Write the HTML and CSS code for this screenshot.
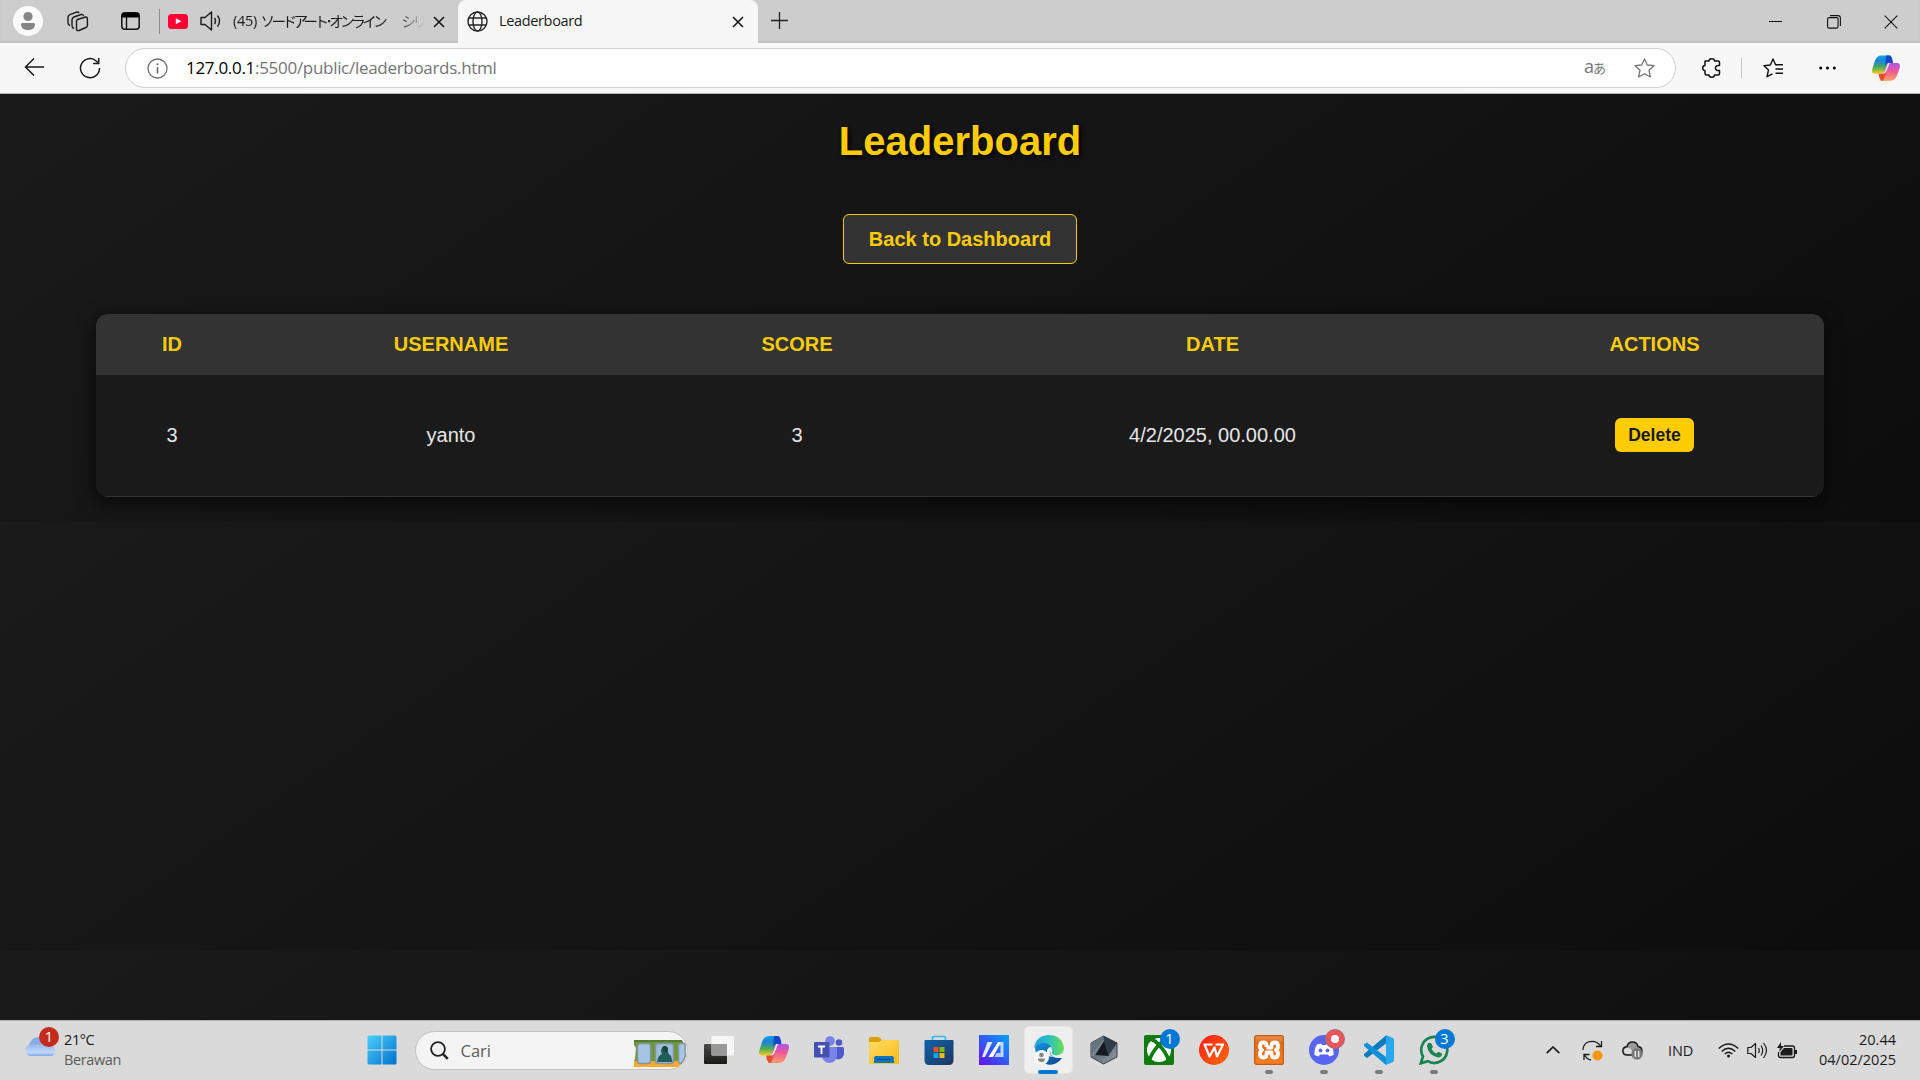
FILE: index.html
```html
<!DOCTYPE html>
<html lang="id">
<head>
<meta charset="utf-8">
<title>Leaderboard</title>
<link rel="stylesheet" href="styles.css">
</head>
<body>
<svg class="defs" width="0" height="0" aria-hidden="true">
  <defs>
    <linearGradient id="cpA" x1="0" y1="0" x2="0" y2="1"><stop offset="0" stop-color="#12a5e8"/><stop offset=".3" stop-color="#1a83d8"/><stop offset=".65" stop-color="#4dac54"/><stop offset="1" stop-color="#f6cf22"/></linearGradient>
    <linearGradient id="cpB" x1="0" y1="0" x2="0" y2="1"><stop offset="0" stop-color="#ab52ea"/><stop offset=".45" stop-color="#ee5798"/><stop offset="1" stop-color="#ffa167"/></linearGradient>
    <linearGradient id="win" x1="0" y1="0" x2="1" y2="1"><stop offset="0" stop-color="#4bd0fb"/><stop offset="1" stop-color="#0071ce"/></linearGradient>
    <linearGradient id="cloudG" x1="0" y1="0" x2="0" y2="1"><stop offset="0" stop-color="#89aeea"/><stop offset=".75" stop-color="#c3d8f8"/><stop offset="1" stop-color="#7ba4e6"/></linearGradient>
    <linearGradient id="folderG" x1="0" y1="0" x2="1" y2="1"><stop offset="0" stop-color="#ffdc69"/><stop offset="1" stop-color="#fcbb14"/></linearGradient>
    <linearGradient id="storeG" x1="0" y1="0" x2="1" y2="1"><stop offset="0" stop-color="#0b62ad"/><stop offset="1" stop-color="#233560"/></linearGradient>
    <linearGradient id="asusG" x1="1" y1="0" x2="0" y2="1"><stop offset="0" stop-color="#00a5ff"/><stop offset="1" stop-color="#6510f5"/></linearGradient>
    <linearGradient id="edgeA" x1="0" y1="0" x2="1" y2="0"><stop offset="0" stop-color="#1e9fe0"/><stop offset=".5" stop-color="#2bbfc0"/><stop offset="1" stop-color="#6be04f"/></linearGradient>
    <linearGradient id="edgeB" x1="0" y1="0" x2="1" y2="1"><stop offset="0" stop-color="#1493dc"/><stop offset="1" stop-color="#0b4591"/></linearGradient>
    <linearGradient id="tvG" x1="0" y1="0" x2="0" y2="1"><stop offset="0" stop-color="#4c4c4a"/><stop offset="1" stop-color="#181818"/></linearGradient>
    <linearGradient id="armG" x1="0" y1="0" x2="1" y2="1"><stop offset="0" stop-color="#596570"/><stop offset=".5" stop-color="#69757e"/><stop offset="1" stop-color="#969da4"/></linearGradient>
    <linearGradient id="wpsG" x1="0" y1="0" x2="1" y2="1"><stop offset="0" stop-color="#ff1c1c"/><stop offset="1" stop-color="#ff6b05"/></linearGradient>
    <linearGradient id="xamG" x1="0" y1="0" x2="0" y2="1"><stop offset="0" stop-color="#ef9145"/><stop offset=".25" stop-color="#dd6d1f"/><stop offset="1" stop-color="#fb7d22"/></linearGradient>
    <symbol id="copilot" viewBox="0 0 30 28">
      <path fill="url(#cpA)" d="M10 0H20L15 15Q13 19.500 9 19.500H3Q-1 19.500 .5 14L3 6Q5 0 10 0Z"/>
      <path fill="#1648c6" d="M15 0H19Q21.500 0 22.500 8H17Q15 8 14 11Z"/>
      <path fill="url(#cpB)" d="M20 27H9L14.500 13Q16.500 8 20.500 8H27Q31 8 29.500 14L27 21Q25 27 20 27Z"/>
      <path fill="#e64d31" d="M15 19L12 27H11Q8 27 7 19.500H10Q13 19.500 15 16Z"/>
      <path fill="#e9eaf0" d="M17.500 8H19L15.500 17Q14.500 19.500 12 19.500H11Q13.500 18.500 14.500 15L16 11Q16.500 9 17.500 8Z"/>
    </symbol>
    <symbol id="close" viewBox="0 0 12 12"><path d="M1 1L11 11M11 1L1 11" fill="none" stroke="#111" stroke-width="1.500"/></symbol>
    <symbol id="person" viewBox="0 0 30 30"><circle cx="15" cy="15" r="15" fill="#fafafa"/><circle cx="15" cy="10.500" r="4.600" fill="#858585"/><path fill="#858585" d="M9.500 17H20.500Q22 17 22 18.500Q21.500 24 15 24Q8.500 24 8 18.500Q8 17 9.500 17Z"/></symbol>
  </defs>
</svg>

<header class="tabstrip">
  <svg class="profile" width="30" height="30"><use href="#person"/></svg>
  <svg class="workspaces" width="22" height="21" viewBox="0 0 22 21" fill="none" stroke="#1a1a1a" stroke-width="1.400"><path d="M10.500 8.500L18.500 6Q20 5.700 20.300 7L20.500 14Q20.500 16 19 16.500L12 19.500Q9.500 20 9.500 18V10.500Q9.500 9 10.500 8.500Z"/><path d="M7 17.500Q5 17 5 14.500V9Q5 7 7 6L14 3.500Q16 3 16.500 5"/><path d="M3 14.500Q1 14 1 11.500V6.500Q1 4.500 3 3.700L9.500 1.200Q11.500 .7 12 2"/></svg>
  <svg class="vtabs" width="19" height="18" viewBox="0 0 19 18"><rect x=".8" y=".8" width="17.400" height="16.400" rx="3" fill="none" stroke="#111" stroke-width="1.500"/><path d="M1 5.500V3Q1 1 3 1H16Q18 1 18 3V5.500Z"/><path d="M5.500 5V17" stroke="#111" stroke-width="1.400"/></svg>
  <span class="strip-line"></span>
  <div class="tab tab-back">
    <svg class="yt" width="20" height="15" viewBox="0 0 20 15"><rect width="20" height="15" rx="3.500" fill="#ff0033"/><path fill="#fff" d="M7.800 4.300L13.300 7.300L7.800 10.300Z"/></svg>
    <svg class="speaker" width="21" height="20" viewBox="0 0 21 20" fill="none" stroke="#1a1a1a" stroke-width="1.400"><path d="M1 6.500H5L11.500 1V19L5 13.500H1Z" stroke-linejoin="round"/><path d="M14.500 7Q16.500 10 14.500 13M17.500 4.500Q21.500 10 17.500 15.500"/></svg>
    <span class="tab-title yt-title">(45) <span class="jp">ソードアート･オンライン</span><span class="jp jp-end">シリ</span></span>
    <svg class="tab-close" width="12" height="12"><use href="#close"/></svg>
  </div>
  <div class="tab tab-active">
    <svg width="21" height="21" viewBox="0 0 21 21" fill="none" stroke="#262626" stroke-width="1.400"><circle cx="10.500" cy="10.500" r="9.500"/><ellipse cx="10.500" cy="10.500" rx="4.500" ry="9.500"/><path d="M2 7H19M2 14H19"/></svg>
    <span class="tab-title active-title">Leaderboard</span>
    <svg class="tab-close" width="12" height="12"><use href="#close"/></svg>
  </div>
  <svg class="newtab" width="18" height="18" viewBox="0 0 18 18"><path d="M8.500 0V17M0 8.500H17" stroke="#222" stroke-width="1.300"/></svg>
  <div class="window-controls">
    <svg width="14" height="14" viewBox="0 0 14 14"><path d="M0 6.500H13" stroke="#111"/></svg>
    <svg width="14" height="14" viewBox="0 0 14 14" fill="none" stroke="#111" stroke-width="1.100"><rect x=".6" y="2.600" width="10.500" height="10.500" rx="1.500"/><path d="M3 .6H11Q13.400 .6 13.400 3V11"/></svg>
    <svg width="14" height="14" viewBox="0 0 14 14"><path d="M.7 .7L13.300 13.300M13.300 .7L.7 13.300" stroke="#111" stroke-width="1.100"/></svg>
  </div>
</header>

<nav class="toolbar">
  <svg class="back" width="21" height="18" viewBox="0 0 21 18" fill="none" stroke="#1a1a1a" stroke-width="1.500"><path d="M20 9H1.500M10 .5L1.500 9L10 17.500"/></svg>
  <svg class="reload" width="22" height="22" viewBox="0 0 22 22" fill="none" stroke="#1a1a1a" stroke-width="1.500"><path d="M20.500 11A9.500 9.500 0 1 1 17.500 4.200L19.500 6.300"/><path d="M19.700 1V6.500H14.200"/></svg>
  <div class="address">
    <svg width="21" height="21" viewBox="0 0 21 21"><circle cx="10.500" cy="10.500" r="9.500" fill="none" stroke="#707070" stroke-width="1.300"/><path d="M10.500 9V15.500" stroke="#666" stroke-width="1.500"/><circle cx="10.500" cy="6.300" r="1" fill="#666"/></svg>
    <span class="url"><b>127.0.0.1</b>:5500/public/leaderboards.html</span>
    <span class="translate">a<span>あ</span></span>
    <svg class="star" width="21" height="20" viewBox="0 0 21 20"><path d="M10.500 1L13.300 7L20 7.700L15 12.200L16.400 19L10.500 15.700L4.600 19L6 12.200L1 7.700L7.700 7Z" fill="none" stroke="#767676" stroke-width="1.300" stroke-linejoin="round"/></svg>
  </div>
  <svg class="puzzle" width="19" height="20" viewBox="0 0 19 20"><path d="M3 3H7Q7 .8 9.800 .8Q12.500 .8 12.500 3H16Q17.500 3 17.500 4.500V7.500Q13.500 7 13.500 10Q13.500 13 17.500 12.500V15.500Q17.500 17 16 17H12.500Q12.500 19.200 9.800 19.200Q7 19.200 7 17H4.500Q3 17 3 15.500V12.500Q.8 12.500 .8 10Q.8 7.500 3 7.500Z" fill="none" stroke="#111" stroke-width="1.500" stroke-linejoin="round"/></svg>
  <span class="tool-line"></span>
  <svg class="favs" width="21" height="20" viewBox="0 0 21 20" fill="none" stroke="#111" stroke-width="1.400"><path d="M13.500 7L12.600 6.800L10 1L7.300 7L1 7.700L5.500 12L4 18.700L9.500 15.800" stroke-linejoin="round"/><path d="M13 6.800H20M12.500 11H20M12.500 15.200H20"/></svg>
  <svg class="dots" width="17" height="4" viewBox="0 0 17 4"><circle cx="1.700" cy="2" r="1.500"/><circle cx="8.500" cy="2" r="1.500"/><circle cx="15.300" cy="2" r="1.500"/></svg>
  <svg class="cop" width="28" height="27"><use href="#copilot"/></svg>
</nav>

<main class="page">
  <h1>Leaderboard</h1>
  <a class="back-button">Back to Dashboard</a>
  <table class="scores">
    <colgroup><col class="c-id"><col class="c-user"><col class="c-score"><col class="c-date"><col class="c-act"></colgroup>
    <thead><tr><th>ID</th><th>USERNAME</th><th>SCORE</th><th>DATE</th><th>ACTIONS</th></tr></thead>
    <tbody><tr><td>3</td><td>yanto</td><td>3</td><td>4/2/2025, 00.00.00</td><td><button class="delete">Delete</button></td></tr></tbody>
  </table>
</main>

<footer class="taskbar">
  <div class="weather">
    <div class="weather-icon">
      <svg width="31" height="21" viewBox="0 0 31 21"><path fill="#88ace9" d="M4 9Q7 0 15 1Q22 1 24 9Z"/><path fill="url(#cloudG)" d="M7 20Q.5 20 .5 14Q.5 9 6 8.500Q11 8 13 10Q16 6 21 6Q26 6 27 10Q30.500 11 30.500 15Q30 20 25 20Z"/></svg>
      <span class="badge badge-red">1</span>
    </div>
    <div class="weather-text"><span>21°C</span><span class="muted">Berawan</span></div>
  </div>
  <div class="app"><svg width="30" height="30" viewBox="0 0 30 30"><path fill="url(#win)" d="M2 .5H14.500V14.500H.5V2Q.5 .5 2 .5ZM15.500 .5H28Q29.500 .5 29.500 2V14.500H15.500ZM.5 15.500H14.500V29.500H2Q.5 29.500 .5 28ZM15.500 15.500H29.500V28Q29.500 29.500 28 29.500H15.500Z"/></svg></div>
  <div class="search">
    <svg width="19" height="19" viewBox="0 0 19 19" fill="none" stroke="#222"><circle cx="8" cy="8" r="6.900" stroke-width="1.800"/><path d="M12.800 12.800L17.800 17.800" stroke-width="2.500"/></svg>
    <span>Cari</span>
    <svg class="train" width="52" height="27" viewBox="0 0 52 27"><path fill="#679a37" d="M0 0H48Q52 7 52 14Q51 21 46 27H0Z"/><path fill="#507c30" d="M0 0H48V2H0Z"/><path fill="#ffa92d" d="M0 21H49Q47 25 43 27H0Z"/><path fill="#eee" d="M0 5L2 8L1 19L0 21Z"/><g stroke="#8c9099" stroke-width="1.500"><rect x="3.500" y="3.500" width="13" height="20" rx="2.500" fill="#a5c5e5"/><rect x="21.500" y="3.500" width="18" height="20" rx="2.500" fill="#9dbddd"/><path fill="#a5c5e5" d="M51 3.500H47Q44.500 3.500 44.500 6V21Q44.500 23 47 23.500Q51 20 51.500 14Z"/></g><path fill="#215d59" d="M23 22Q24 15 28 14Q26 11 28 8Q29 6 31 6Q35 7 34 12Q34 14 37 16L38.500 22Z"/><path fill="#174540" d="M28 8Q31 4 34 8L33 12L29 11Z"/></svg>
  </div>
  <div class="apps">
    <div class="app"><svg width="30" height="30" viewBox="0 0 30 30"><rect x="0" y="9" width="23" height="20" rx="1" fill="url(#tvG)"/><rect x="7.500" y="1" width="22.500" height="19.500" rx="1" fill="#f8f8f8" fill-opacity=".9"/><path fill="#999" d="M7.500 9H22Q23 9 23 10V20.500H8.500Q7.500 20.500 7.500 19.500Z"/></svg></div>
    <div class="app"><svg width="30" height="28"><use href="#copilot"/></svg></div>
    <div class="app"><svg width="30" height="30" viewBox="0 0 30 30"><circle cx="25" cy="7.500" r="3.300" fill="#5059c9"/><path fill="#5059c9" d="M21 12H28.500Q30 12 30 13.500V19Q29 24 24 24.500L20 23Z"/><circle cx="16" cy="6" r="4.800" fill="#7b83eb"/><path fill="#7b83eb" d="M8 12H21.500Q23 12 23 13.500V21Q22 28 15.500 28Q9 28 8 21Z"/><rect y="7" width="15.500" height="15.500" rx="1" fill="#4650b1"/><path d="M4 11.500H11M7.500 11.500V19" stroke="#fff" stroke-width="1.900"/></svg></div>
    <div class="app"><svg width="30" height="30" viewBox="0 0 30 30"><path fill="#e0a000" d="M0 3Q0 2 1 2H10L13 5H29Q30 5 30 6V10H0Z"/><path fill="url(#folderG)" d="M0 8Q0 7 1 7H10L13 5H30V28Q30 29 29 29H1Q0 29 0 28Z"/><path fill="#0e74bf" d="M5 28V23Q5 21 7 21H23Q25 21 25 23V28Z"/><path stroke="#084e86" d="M8.500 24.500H21.500"/></svg></div>
    <div class="app"><svg width="30" height="30" viewBox="0 0 30 30"><path fill="none" stroke="#27bff0" stroke-width="1.700" d="M8.500 6V2.500Q8.500 1.500 9.500 1.500H20.500Q21.500 1.500 21.500 2.500V6"/><path fill="url(#storeG)" d="M1 5H29Q29.500 5 29.500 6V25Q29.500 30 25 30H5Q.5 30 .5 25V6Q.5 5 1 5Z"/><path fill="#f25022" d="M9.500 12H14.500V17H9.500Z"/><path fill="#7fba00" d="M15.500 12H20.500V17H15.500Z"/><path fill="#00a4ef" d="M9.500 18H14.500V23H9.500Z"/><path fill="#ffb900" d="M15.500 18H20.500V23H15.500Z"/></svg></div>
    <div class="app"><svg width="30" height="30" viewBox="0 0 30 30"><path fill="url(#asusG)" d="M0 0H30V30H0Z"/><path fill="#dfe6ff" d="M8.500 7H13.500L6 22H3Z"/><path fill="#fff" d="M19 7H22L14 22H9.500Z"/><path fill="#c3d6ff" d="M21 7H24.500V22H21.500V10.500L19.500 11Z"/><path fill="#b8c9ff" d="M15.500 22L17.500 18H22V22Z"/></svg></div>
    <div class="app app-active"><svg width="30" height="30" viewBox="0 0 30 30"><path fill="url(#edgeB)" d="M1 12Q6 6 13 8Q19 11 17 16Q15 24 28 23Q22 31 14 29.500Q2 27 1 12Z"/><path fill="url(#edgeA)" d="M0 13Q2 1 14 0Q28 0 30 13Q30 20 22 20.500Q17 20 18 17Q19 12 14 9Q6 6 0 13Z"/><path fill="#eee" d="M13 15Q15 11 17.500 12.500Q18 15 16.500 17.500Q16 21 19 22Q14 22 13 19Z"/><circle cx="7.500" cy="22.500" r="7.500" fill="#f6f6f6"/><circle cx="7.500" cy="20" r="2.300" fill="#858585"/><path fill="#858585" d="M4 23.500H11Q11 27 7.500 27Q4 27 4 23.500Z"/></svg><i class="run"></i></div>
    <div class="app"><svg width="30" height="30" viewBox="0 0 30 30"><path fill="url(#armG)" stroke="#343b42" d="M14.500 1L28 8V22L14.500 29L2 22V8Z"/><path fill="#333d47" d="M14.500 1L28 8L20 20L14.500 5L2 20V8Z"/><path fill="#151b22" d="M15 6L20 21L6 20Z"/><path fill="#86929b" d="M14.500 1L15 6L6 20L2 22V8Z" fill-opacity=".65"/></svg></div>
    <div class="app"><svg width="30" height="30" viewBox="0 0 30 30"><rect width="30" height="30" rx="2" fill="#107c10"/><circle cx="15" cy="15" r="12" fill="#fff"/><path fill="none" stroke="#107c10" stroke-width="3.800" d="M7 4Q12 6 15 10Q22 17 24.500 25M23 4Q18 6 15 10Q8 17 5.500 25"/></svg><span class="badge badge-blue">1</span></div>
    <div class="app"><svg width="30" height="30" viewBox="0 0 30 30"><circle cx="15" cy="15" r="15" fill="url(#wpsG)"/><path fill="none" stroke="#fff" stroke-width="2.200" stroke-linejoin="round" d="M13.500 9.500H5.500L10.500 21.500L15.500 12.500L18 21.500L24 9.500H16.500"/></svg></div>
    <div class="app"><svg width="30" height="30" viewBox="0 0 30 30"><rect x=".6" y=".6" width="28.800" height="28.800" rx="2" fill="url(#xamG)" stroke="#bd5d18" stroke-width="1.200"/><path fill="none" stroke="#fff" stroke-width="3.800" stroke-linejoin="round" d="M12.500 12V10.500Q12.500 7.500 9.500 7.500Q6 7.500 6 11Q6 14 8 15Q6 16 6 19Q6 22.500 9.500 22.500Q12.500 22.500 12.500 19.500V17.500H17.500V19.500Q17.500 22.500 20.500 22.500Q24 22.500 24 19Q24 16 22 15Q24 14 24 11Q24 7.500 20.500 7.500Q17.500 7.500 17.500 10.500V12.500H12.500"/></svg><i class="run"></i></div>
    <div class="app"><svg width="30" height="30" viewBox="0 0 30 30"><circle cx="15" cy="15" r="15" fill="#5865f2"/><path fill="#fff" d="M8 9.500L12 8.500L13 10H17L18 8.500L22 9.500Q25 14 24.500 20L20.500 21.500L19 19.500H11L9.500 21.500L5.500 20Q5 14 8 9.500Z"/><circle cx="11.500" cy="15.500" r="1.900" fill="#5865f2"/><circle cx="18.500" cy="15.500" r="1.900" fill="#5865f2"/></svg><span class="badge badge-rec"></span><i class="run"></i></div>
    <div class="app"><svg width="30" height="30" viewBox="0 0 30 30"><path fill="#0879bd" d="M0 19L22 .5V8.500L3 23L.5 21Q-.5 20 0 19Z"/><path fill="#1291d8" d="M0 11Q-.5 10 .5 9L3 7.500L22 22V30Z"/><path fill="#29a8f0" d="M22 0L29 3Q30 3.500 30 5V25Q30 26.500 29 27L22 30Z"/></svg><i class="run"></i></div>
    <div class="app"><svg width="30" height="30" viewBox="0 0 30 30"><path fill="none" stroke="#178352" stroke-width="2.700" d="M1.800 28.300L4 21.500A13 13 0 1 1 8.700 26.200Z"/><path fill="#178352" d="M9.500 8H12L14 12L12.500 14Q14 17 17.500 18.500L19.500 16.800L23 18.500Q23 22 19.500 22.500Q9 20.500 8 11Q8 9 9.500 8Z"/></svg><span class="badge badge-blue">3</span><i class="run"></i></div>
  </div>
  <div class="tray">
    <svg class="chev" width="14" height="8" viewBox="0 0 14 8"><path d="M.7 7.200L7 1L13.300 7.200" fill="none" stroke="#1a1a1a" stroke-width="1.700"/></svg>
    <svg class="sync" width="21" height="21" viewBox="0 0 21 21" fill="none" stroke="#1a1a1a" stroke-width="1.300"><path d="M1 10Q1 4.500 6 2Q14-.5 18.500 6M19.500 1V6.500H14M2 20V14.500H7.500M2.500 15Q5 19.500 9 20"/><circle cx="15.500" cy="15.500" r="5" fill="#f99600" stroke="none"/></svg>
    <svg class="cloud" width="21" height="19" viewBox="0 0 21 19"><path fill="#999" stroke="#1a1a1a" stroke-width="1.400" d="M5 14Q.8 14 .8 10Q.8 6 5 5.500Q6 1 10.500 1Q15 1 16 5.500Q20 6 20 10Q20 14 16 14Z"/><path fill="#ddd" d="M5 13Q2 13 2 10Q2 6.500 6 7Q9 7 10 10V13Z"/><circle cx="15" cy="13" r="5.700" fill="#777"/><path d="M13.300 10V16M16.700 10V16" stroke="#fff" stroke-width="1.200"/></svg>
    <span class="lang">IND</span>
    <svg class="wifi" width="21" height="15" viewBox="0 0 21 15" fill="none" stroke="#1a1a1a" stroke-width="1.400"><path d="M.7 5.500Q10.500-3.500 20.300 5.500M3.700 8.500Q10.500 2 17.300 8.500M6.700 11Q10.500 7.500 14.300 11"/><circle cx="10.500" cy="13" r="1.500" fill="#1a1a1a" stroke="none"/></svg>
    <svg class="vol" width="21" height="17" viewBox="0 0 21 17" fill="none" stroke="#1a1a1a" stroke-width="1.200"><path d="M.8 5.500H4L8.500 1.500V15.500L4 11.500H.8Z" stroke-linejoin="round"/><path d="M11.500 6Q13 8.500 11.500 11M14 3.500Q17.500 8.500 14 13.500M16.500 1Q22.500 8.500 16.500 16"/></svg>
    <svg class="batt" width="21" height="17" viewBox="0 0 21 17"><path fill="none" stroke="#1a1a1a" stroke-width="1.300" d="M7 4H15.500Q17.500 4 17.500 6V13.500Q17.500 15.500 15.500 15.500H3.500Q1.500 15.500 1.500 13.500V10"/><path d="M7 6H14.500Q15.500 6 15.500 7V12.500Q15.500 13.500 14.500 13.500H3.500V10ZM18 8H20V12H18ZM4 0L0 6H3L2 10L7 4H4Z" fill="#1a1a1a"/></svg>
    <div class="clock"><span class="time">20.44</span><span class="date">04/02/2025</span></div>
  </div>
</footer>
</body>
</html>
```
FILE: styles.css
```css
* { box-sizing: border-box; }
body {
  margin: 0;
  width: 1920px;
  height: 1080px;
  overflow: hidden;
  display: flex;
  flex-direction: column;
  font-family: "Open Sans", "Noto Sans CJK JP", sans-serif;
  color: #1a1a1a;
}
svg { display: block; flex: none; }
.defs { position: absolute; }

/* Tab strip */
.tabstrip { height: 43px; flex: none; display: flex; align-items: center; background: #cdcdcd; box-shadow: inset 0 -2px 1px #c1c1c1; padding-left: 13px; }
.profile { margin-right: 24px; margin-bottom: 1px; }
.workspaces { margin-right: 32px; margin-bottom: 1px; }
.vtabs { margin-right: 19px; margin-bottom: 1px; }
.strip-line { width: 1px; height: 25px; background: #8c8c8c; margin-right: 8px; }
.tab { display: flex; align-items: center; height: 43px; flex: none; white-space: nowrap; }
.tab-back { width: 290px; }
.speaker { margin-left: 12px; margin-bottom: 1px; }
.tab-title { font-size: 14.500px; line-height: 20px; height: 22px; }
.yt-title { margin-left: 12px; width: 191px; overflow: hidden; display: flex; letter-spacing: -.3px; white-space: pre; mask-image: linear-gradient(to right, #000 165px, transparent 191px); }
.jp { font-family: "Noto Sans CJK JP", sans-serif; font-size: 14.500px; width: 124px; flex: none; letter-spacing: -3.500px; }
.jp-end { margin-left: 17px; }
.tab-close { margin-left: 9px; }
.tab-active { width: 300px; background: #f7f7f7; border-radius: 8px 8px 0 0; padding-left: 9px; }
.active-title { margin-left: 11px; width: 100px; letter-spacing: -.35px; }
.tab-active .tab-close { margin-left: auto; margin-right: 14px; }
.newtab { margin-left: 13px; margin-bottom: 1px; }
.window-controls { display: flex; gap: 43.500px; margin-left: auto; margin-right: 22px; }

/* Toolbar */
.toolbar { height: 51px; flex: none; display: flex; align-items: center; background: #f7f7f7; border-bottom: 1px solid #b5b5b5; padding-left: 24px; }
.back { margin-right: 34px; margin-bottom: 2px; }
.reload { margin-right: 24px; }
.address { width: 1551px; height: 40px; flex: none; display: flex; align-items: center; background: #fff; border: 1px solid #cfcfcf; border-radius: 20px; padding-left: 21px; }
.url { margin-left: 18px; margin-bottom: 2px; font-size: 17px; color: #757575; letter-spacing: -.3px; white-space: nowrap; }
.url b { font-weight: 400; color: #000; }
.translate { margin-left: auto; margin-right: 28px; margin-bottom: 2px; font-size: 18px; line-height: 20px; color: #767676; display: flex; align-items: baseline; }
.translate span { font-size: 13px; margin-left: -1px; }
.star { margin-right: 20px; }
.puzzle { margin-left: 26px; }
.tool-line { width: 1px; height: 20px; background: #c6c6c6; margin: 0 21px 0 20px; }
.favs { margin-right: 35px; }
.dots { margin-right: 36px; margin-bottom: 1px; }

/* Leaderboard page */
.page {
  height: 926px;
  flex: none;
  display: flex;
  flex-direction: column;
  align-items: center;
  font-family: "Liberation Sans", Arial, sans-serif;
  font-size: 20px;
  background: linear-gradient(145deg, #1a1a1a, #0d0d0d) 0 0 / 100% 428px;
  padding-top: 24px;
}
h1 { margin: 0; font-size: 40px; line-height: 46px; color: #fc0; text-shadow: 2px 2px 5px #000; }
.back-button { margin-top: 50px; height: 50px; padding: 0 25px; border: 1px solid #fc0; border-radius: 6px; background: #333; color: #fc0; font-weight: 700; line-height: 48px; }
.scores { margin-top: 50px; width: 1728px; height: 183px; table-layout: fixed; border-collapse: separate; border-spacing: 0; border-radius: 12px; overflow: hidden; background: #1a1a1a; box-shadow: 0 5px 19px rgba(0, 0, 0, .7); color: #e6e6e6; text-align: center; }
.c-id { width: 152px; }
.c-user { width: 406px; }
.c-score { width: 286px; }
.c-date { width: 545px; }
.c-act { width: 339px; }
.scores th { height: 61px; padding: 0 0 1px; background: #333; color: #fc0; }
.scores td { height: 122px; padding: 0 0 1px; border-bottom: 1px solid #333; }
.delete { display: block; margin: 0 auto; width: 79px; height: 34px; padding: 0; border: 0; border-radius: 6px; background: #fc0; color: #1a1a1a; font: 700 17.500px "Liberation Sans", Arial, sans-serif; }

/* Taskbar */
.taskbar { height: 60px; flex: none; display: flex; align-items: center; background: #dadada; border-top: 1px solid #b0b0b0; padding-bottom: 1px; }
.weather { width: 354.500px; flex: none; padding-left: 25px; display: flex; align-items: center; }
.weather-icon { position: relative; width: 31px; margin-bottom: 7px; }
.weather-text { margin-left: 8px; padding-bottom: 1px; display: flex; flex-direction: column; font-size: 14.500px; line-height: 20px; letter-spacing: -.4px; }
.muted { color: #5b5b5b; }
.badge { position: absolute; width: 20px; height: 20px; border-radius: 50%; color: #fff; font-size: 14.500px; line-height: 20px; text-align: center; }
.badge-red { left: 14px; top: -9px; background: #c42b1c; }
.badge-blue { left: 28.500px; top: 3px; background: #0078d4; }
.badge-rec { left: 30px; top: 4px; width: 18px; height: 18px; background: #fff; border: 5px solid #ed5558; box-shadow: 0 0 0 1px #9b7074; }
.app { position: relative; width: 55px; height: 48px; flex: none; display: flex; align-items: center; justify-content: center; }
.app-active::before { content: ""; position: absolute; inset: 0 3px; background: #efefef; border: 1px solid #e5e5e5; border-radius: 5px; }
.app-active svg { position: relative; }
.run { position: absolute; bottom: 0; left: 24px; width: 8px; height: 4px; border-radius: 2px; background: #7b7b7b; }
.app-active .run { left: 17px; width: 20px; background: #0078d4; }
.search { width: 273px; height: 39px; margin: 0 3.500px 0 5px; flex: none; display: flex; align-items: center; background: #f4f4f4; border: 1px solid #c2c2c2; border-radius: 20px; padding-left: 14px; overflow: hidden; font-size: 16.500px; color: #5c5c5c; }
.search span { margin-left: 12px; }
.train { margin-left: auto; margin-right: 1px; margin-top: 7px; }
.apps { display: flex; }
.tray { margin-left: auto; padding-right: 24px; display: flex; align-items: center; white-space: nowrap; }
.sync { margin-left: 22px; }
.cloud { margin-left: 19px; }
.lang { margin-left: 25px; width: 26px; font-size: 14.500px; letter-spacing: -.1px; }
.wifi { margin-left: 24px; }
.vol { margin-left: 8px; }
.batt { margin-left: 9px; }
.clock { margin-left: 20px; padding-bottom: 1px; width: 78px; display: flex; flex-direction: column; align-items: flex-end; font-size: 14.500px; line-height: 20px; }
```
